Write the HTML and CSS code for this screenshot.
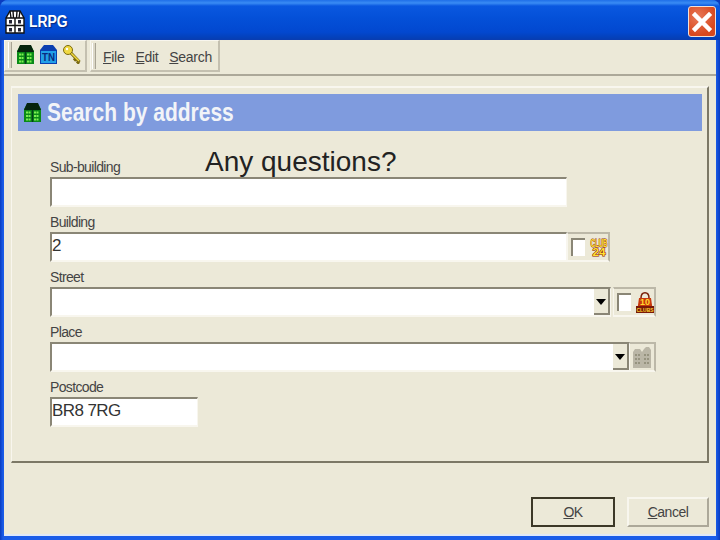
FILE: index.html
```html
<!DOCTYPE html>
<html lang="en">
<head>
  <meta charset="UTF-8">
  <title>LRPG</title>
  <link rel="stylesheet" href="styles.css">
</head>
<body>
  <div class="window">
    <div class="titlebar">
      <svg class="title-icon" width="20" height="24" viewBox="0 0 20 24">
        <path d="M1 23V8L5 1H15L19 8V23Z" fill="#fff" stroke="#111" stroke-width="1.4"/>
        <path d="M5 1L6 8M8 1L8.500 8M12 1L11.500 8M15 1L14 8" stroke="#111" stroke-width="1.4" fill="none"/>
        <path d="M1 8H19M10 8V23M1 15.500H19" stroke="#111" stroke-width="1.4"/>
        <rect x="4" y="10" width="3" height="3.500" fill="#223"/>
        <rect x="13" y="10" width="3" height="3.500" fill="#223"/>
        <rect x="4" y="18" width="3" height="3.500" fill="#223"/>
        <rect x="13" y="18" width="3" height="3.500" fill="#223"/>
      </svg>
      <span class="title-text">LRPG</span>
      <div class="close-btn">
        <svg width="26" height="26" viewBox="0 0 26 26">
          <path d="M6 6L20 20M20 6L6 20" stroke="#fff" stroke-width="4.500" stroke-linecap="square"/>
        </svg>
      </div>
    </div>

    <div class="client">
      <div class="toolbar">
        <div class="tool-group icons">
          <span class="grip"></span>
          <svg width="17" height="19" viewBox="0 0 17 19">
            <path d="M0 19V6L3 1H14L17 6V19Z" fill="#0a8a18"/>
            <path d="M3 0H14L17 7H0Z" fill="#06240e"/>
            <path d="M8.500 7V19" stroke="#04401a" stroke-width="1.500"/>
            <path d="M2 9.500H7M2 13H7M2 16.500H7M10 9.500H15M10 13H15M10 16.500H15" stroke="#7cf050" stroke-width="2" stroke-dasharray="2 .5"/>
          </svg>
          <svg width="17" height="19" viewBox="0 0 17 19">
            <path d="M0 19V5L4 0H13L17 5V19Z" fill="#0b3fb0"/>
            <rect x="1" y="6" width="15" height="12" fill="#22a0e8"/>
            <text x="8.500" y="16" class="tn" textLength="13" lengthAdjust="spacingAndGlyphs">TN</text>
          </svg>
          <svg class="key" width="18" height="19" viewBox="0 0 18 19">
            <path d="M7 7L16.500 17M13 13.500L11 15.500M16 16.500L14 18.500" stroke="#7a6a10" stroke-width="3.200" fill="none"/>
            <path d="M7 7L16 16" stroke="#f0d840" stroke-width="1.500" fill="none"/>
            <circle cx="5" cy="5" r="4.500" fill="#f0d840" stroke="#7a6a10"/>
            <circle cx="4" cy="4" r="1.200" fill="#fff"/>
          </svg>
        </div>
        <div class="tool-group menu">
          <span class="grip"></span>
          <span class="menu-item"><u>F</u>ile</span>
          <span class="menu-item"><u>E</u>dit</span>
          <span class="menu-item"><u>S</u>earch</span>
        </div>
      </div>

      <div class="panel">
        <div class="heading">
          <svg width="17" height="19" viewBox="0 0 17 19">
            <path d="M0 19V6L3 1H14L17 6V19Z" fill="#0a8a18"/>
            <path d="M3 0H14L17 7H0Z" fill="#06240e"/>
            <path d="M8.500 7V19" stroke="#04401a" stroke-width="1.500"/>
            <path d="M2 9.500H7M2 13H7M2 16.500H7M10 9.500H15M10 13H15M10 16.500H15" stroke="#7cf050" stroke-width="2" stroke-dasharray="2 .5"/>
          </svg>
          <span class="heading-text">Search by address</span>
        </div>

        <form class="form">
          <p class="overlay-note">Any questions?</p>

          <label class="label">Sub-building</label>
          <div class="row"><div class="field wide"></div></div>

          <label class="label">Building</label>
          <div class="row">
            <div class="field wide">2</div>
            <div class="addon">
              <span class="check"></span>
              <svg class="badge" width="18" height="19" viewBox="0 0 18 19">
                <text x="9" y="8.500" class="badge-text" textLength="17" lengthAdjust="spacingAndGlyphs">CLUB</text>
                <text x="9" y="18" class="badge-text" textLength="13" lengthAdjust="spacingAndGlyphs">24</text>
              </svg>
            </div>
          </div>

          <label class="label">Street</label>
          <div class="row">
            <div class="field combo street"><span class="drop"></span></div>
            <div class="addon">
              <span class="check"></span>
              <svg class="badge" width="18" height="22" viewBox="0 0 18 22">
                <path d="M1 21L3 7H15L17 21Z" fill="#c8380c"/>
                <path d="M5 7C5 0 13 0 13 7" fill="none" stroke="#7a2008" stroke-width="1.500"/>
                <text x="9" y="13.500" class="badge-ten" textLength="10" lengthAdjust="spacingAndGlyphs">10</text>
                <rect x="0" y="15" width="18" height="7" fill="#7a1808"/>
                <text x="9" y="21" class="badge-small" textLength="17" lengthAdjust="spacingAndGlyphs">CLUBS</text>
              </svg>
            </div>
          </div>

          <label class="label">Place</label>
          <div class="row">
            <div class="field combo place"><span class="drop"></span></div>
            <div class="addon disabled">
              <svg width="18" height="21" viewBox="0 0 18 21">
                <path d="M0 21V5L2 2H7L9 5L11 2L13 0H16L18 3V21Z" fill="#bab6a6"/>
                <path d="M2 8H7M2 12H7M2 16H7M11 8H16M11 12H16M11 16H16" stroke="#96937f" stroke-width="2" stroke-dasharray="2 1"/>
              </svg>
            </div>
          </div>

          <label class="label">Postcode</label>
          <div class="row"><div class="field short">BR8 7RG</div></div>
        </form>
      </div>

      <div class="buttons">
        <button class="btn default" type="button"><u>O</u>K</button>
        <button class="btn" type="button"><u>C</u>ancel</button>
      </div>
    </div>
  </div>
</body>
</html>
```

FILE: styles.css
```css
* {
  margin: 0;
  padding: 0;
  box-sizing: border-box;
}
html, body {
  width: 720px;
  height: 540px;
  overflow: hidden;
}
body {
  font-family: "Liberation Sans", Arial, sans-serif;
  color: #333;
  background: #0a3cc0;
}
.window {
  width: 720px;
  height: 540px;
  display: flex;
  flex-direction: column;
  background: linear-gradient(90deg, #0a3cc0 0, #1a5ce8 3px, #1a5ce8 716px, #0a3cc0 720px);
  border-radius: 8px 8px 0 0;
  overflow: hidden;
}
.titlebar {
  height: 40px;
  flex-shrink: 0;
  display: flex;
  align-items: center;
  padding: 3px 4px 0 5px;
  background: linear-gradient(#1f6fe8 0, #3a8cf4 3px, #0a58e0 6px, #0450d8 18px, #0248d0 32px, #0440b8 38px, #0a3cb0 40px);
}
.title-icon {
  margin-right: 4px;
}
.title-text {
  color: #fff;
  font-size: 16px;
  font-weight: bold;
  text-shadow: 1px 1px 1px #0a2a80;
  transform: scaleX(.87);
  transform-origin: left;
}
.close-btn {
  margin-left: auto;
  width: 28px;
  height: 31px;
  display: flex;
  align-items: center;
  justify-content: center;
  background: radial-gradient(circle at 35% 35%, #e87a5a, #d8481e 70%);
  border: 1px solid #f0e0d8;
  border-radius: 3px;
}
.client {
  flex: 1;
  margin: 0 4px 4px 4px;
  background: #ece9d8;
  display: flex;
  flex-direction: column;
  border-bottom: 2px solid #dfe8f8;
}
.toolbar {
  height: 36px;
  flex-shrink: 0;
  display: flex;
  gap: 3px;
  border-bottom: 2px solid #aca899;
}
.tool-group {
  height: 32px;
  display: flex;
  align-items: center;
  border-top: 1px solid #f8f6ee;
  border-right: 2px solid #c4c0b0;
  border-bottom: 2px solid #c4c0b0;
  border-left: 1px solid #f8f6ee;
}
.icons {
  width: 83px;
  gap: 6px;
  padding-bottom: 2px;
}
.menu {
  width: 130px;
  padding-top: 2px;
}
.grip {
  width: 4px;
  height: 26px;
  margin: 0 -1px 0 3px;
  border-left: 1px solid #fff;
  border-right: 1px solid #a8a494;
  background: #dcd8c8;
  flex-shrink: 0;
}
.menu .grip {
  margin: -2px 7px 0 1px;
}
.menu-item {
  font-size: 14px;
  margin-right: 11px;
  color: #444;
  letter-spacing: -0.3px;
}
.tn {
  font: bold 10px "Liberation Sans", sans-serif;
  fill: #0a2a80;
  text-anchor: middle;
}
.panel {
  width: 698px;
  height: 377px;
  margin: 10px 0 0 7px;
  flex-shrink: 0;
  border-top: 2px solid #f8f6ee;
  border-left: 1px solid #f8f6ee;
  border-right: 2px solid #7c7866;
  border-bottom: 2px solid #7c7866;
  padding: 6px 5px 0 6px;
}
.heading {
  height: 37px;
  display: flex;
  align-items: center;
  gap: 6px;
  padding-left: 6px;
  background: #7f9bde;
  color: #f2f4f8;
  font-size: 25px;
  font-weight: bold;
}
.heading-text {
  transform: scaleX(.84);
  transform-origin: left;
  white-space: nowrap;
}
.form {
  position: relative;
  padding: 27px 0 0 32px;
}
.overlay-note {
  position: absolute;
  left: 187px;
  top: 15px;
  font-size: 28px;
  line-height: 32px;
  color: #222;
}
.label {
  display: block;
  height: 19px;
  font-size: 14px;
  line-height: 18px;
  letter-spacing: -0.65px;
  color: #444;
}
.row {
  display: flex;
  height: 30px;
  margin-bottom: 6px;
}
.field {
  height: 30px;
  background: #fff;
  border-top: 2px solid #8a8676;
  border-left: 2px solid #8a8676;
  border-right: 1px solid #f8f6ee;
  border-bottom: 2px solid #f8f6ee;
  font-size: 17px;
  line-height: 24px;
  letter-spacing: -0.6px;
  color: #333;
}
.wide {
  width: 517px;
}
.short {
  width: 148px;
}
.combo {
  display: flex;
  justify-content: flex-end;
}
.street {
  width: 561px;
  margin-right: 2px;
}
.place {
  width: 580px;
}
.drop {
  width: 16px;
  height: 26px;
  background: #ece9d8;
  border-right: 2px solid #8a8676;
  border-bottom: 2px solid #8a8676;
  position: relative;
}
.drop::after {
  content: "";
  position: absolute;
  left: 2px;
  top: 10px;
  border-top: 6px solid #000;
  border-left: 5px solid transparent;
  border-right: 5px solid transparent;
}
.addon {
  height: 30px;
  width: 43px;
  display: flex;
  align-items: center;
  gap: 5px;
  padding-left: 3px;
  border-top: 2px solid #bcb8a8;
  border-left: 1px solid #f8f6ee;
  border-right: 2px solid #bcb8a8;
  border-bottom: 2px solid #f8f6ee;
}
.disabled {
  width: 26px;
  padding-left: 3px;
  border-left: none;
}
.check {
  width: 14px;
  height: 18px;
  background: #fff;
  border-top: 2px solid #8a8676;
  border-left: 2px solid #8a8676;
  flex-shrink: 0;
}
.badge {
  flex-shrink: 0;
  overflow: visible;
}
.badge-text {
  font: bold 10px "Liberation Sans", sans-serif;
  fill: #ffe030;
  stroke: #8a2008;
  stroke-width: 1px;
  paint-order: stroke;
  text-anchor: middle;
}
.badge-ten {
  font: bold 9px "Liberation Sans", sans-serif;
  fill: #ffd830;
  text-anchor: middle;
}
.badge-small {
  font: bold 6px "Liberation Sans", sans-serif;
  fill: #ffd830;
  text-anchor: middle;
}
.buttons {
  display: flex;
  justify-content: flex-end;
  gap: 12px;
  padding: 34px 7px 0 0;
}
.btn {
  height: 30px;
  font-family: "Liberation Sans", Arial, sans-serif;
  font-size: 14px;
  letter-spacing: -0.5px;
  color: #444;
  background: #ece9d8;
  width: 82px;
  border-top: 2px solid #f8f6ee;
  border-left: 2px solid #f8f6ee;
  border-right: 2px solid #aca899;
  border-bottom: 2px solid #aca899;
}
.default {
  width: 84px;
  border: 2px solid #3c3828;
}
```
